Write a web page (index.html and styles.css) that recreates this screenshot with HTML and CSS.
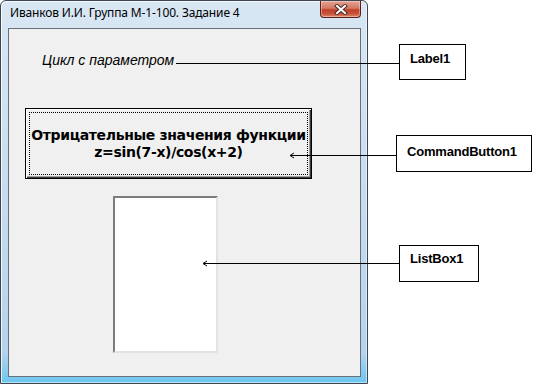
FILE: index.html
```html
<!DOCTYPE html>
<html lang="ru">
<head>
    <meta charset="UTF-8">
    <title>Цикл с параметром</title>
    <link rel="stylesheet" href="styles.css">
</head>
<body>
    <div class="window">
        <div class="titlebar">
            <span class="title">Иванков И.И. Группа М-1-100. Задание 4</span>
            <span class="close">
                <svg width="14" height="11" viewBox="0 0 14 11">
                    <path d="M3 2 L11 9 M11 2 L3 9" stroke="#4a2a26" stroke-width="4" stroke-linecap="square" fill="none"/>
                    <path d="M3 2 L11 9 M11 2 L3 9" stroke="#fff" stroke-width="2" stroke-linecap="square" fill="none"/>
                </svg>
            </span>
        </div>
        <div class="client">
            <div class="caption">Цикл с параметром</div>
            <button class="cmd"><span class="focus">Отрицательные значения функции<br>z=sin(7-x)/cos(x+2)</span></button>
            <div class="listbox"></div>
        </div>
    </div>

    <!-- leader lines to the control names -->
    <svg class="leaders" width="535" height="384" viewBox="0 0 535 384">
        <path d="M176 63.5 H399" />
        <path d="M291 155.5 H396 M294 153 L290 155.5 L294 158" />
        <path d="M204 263.5 H399 M207 261 L203 263.5 L207 266" />
    </svg>

    <div class="callout callout-label">Label1</div>
    <div class="callout callout-cmd">CommandButton1</div>
    <div class="callout callout-list">ListBox1</div>
</body>
</html>
```

FILE: styles.css
```css
* {
    margin: 0;
    padding: 0;
    box-sizing: border-box;
}

body {
    width: 535px;
    height: 384px;
    background: #fff;
    position: relative;
    overflow: hidden;
}

.window {
    width: 368px;
    height: 384px;
    border: 1px solid #3c4550;
    border-radius: 6px 6px 0 0;
    background: linear-gradient(to bottom, #d9e7f4 0%, #c8dcef 50%, #b4d3ee 92%, #6cc6f0 100%);
    box-shadow: inset 1px 1px 0 rgba(255, 255, 255, 0.8), inset -1px -1px 0 rgba(255, 255, 255, 0.5);
    display: flex;
    flex-direction: column;
}

.titlebar {
    height: 27px;
    display: flex;
    align-items: flex-start;
    justify-content: space-between;
    padding-left: 9px;
    padding-right: 6px;
}

.title {
    font-family: "Noto Sans", sans-serif;
    font-size: 12px;
    line-height: 16px;
    letter-spacing: -0.15px;
    padding-top: 4px;
    color: #000;
}

.close {
    width: 41px;
    height: 17px;
    border: 1px solid #5b2119;
    border-top: none;
    border-radius: 0 0 4px 4px;
    background: linear-gradient(to bottom, #e3a493 0%, #d27963 45%, #c2402a 55%, #c7533a 80%, #dd8a6b 100%);
    box-shadow: inset 0 0 0 1px rgba(255, 255, 255, 0.35);
    display: flex;
    align-items: center;
    justify-content: center;
}

.close svg {
    display: block;
}

.client {
    width: 353px;
    height: 349px;
    margin-left: 7px;
    border: 1px solid #6a7079;
    background: #f0f0f0;
    padding-top: 23px;
    display: flex;
    flex-direction: column;
    align-items: flex-start;
}

.caption {
    margin-left: 33px;
    font-family: "Liberation Sans", sans-serif;
    font-style: italic;
    font-size: 14px;
    line-height: 17px;
    color: #000;
}

.cmd {
    margin-top: 39px;
    margin-left: 16px;
    width: 287px;
    height: 71px;
    padding: 3px;
    background: #f0f0f0;
    border: 1px solid #000;
    box-shadow: inset 1px 1px 0 #fff, inset -1px -1px 0 #3c3c3c, inset -2px -2px 0 #a0a0a0;
    font-family: "DejaVu Sans", sans-serif;
    font-weight: bold;
    font-size: 14px;
    line-height: 17px;
    letter-spacing: -0.35px;
    white-space: nowrap;
    color: #000;
}

.focus {
    display: flex;
    align-items: center;
    justify-content: center;
    height: 100%;
    border: 1px dotted #000;
    text-align: center;
}

.listbox {
    margin-top: 17px;
    margin-left: 104px;
    width: 105px;
    height: 157px;
    background: #fff;
    border: 2px solid;
    border-color: #7c7c7c #e3e3e3 #e3e3e3 #7c7c7c;
}

.leaders {
    position: absolute;
    left: 0;
    top: 0;
    pointer-events: none;
}

.leaders path {
    stroke: #000;
    stroke-width: 1;
    fill: none;
}

.callout {
    position: absolute;
    background: #fff;
    border: 1px solid #000;
    font-family: "Liberation Sans", sans-serif;
    font-weight: bold;
    font-size: 13px;
    line-height: 15px;
    letter-spacing: -0.2px;
    color: #000;
    padding-left: 10px;
    padding-top: 6px;
}

.callout-label {
    left: 399px;
    top: 44px;
    width: 67px;
    height: 36px;
}

.callout-cmd {
    left: 396px;
    top: 135px;
    width: 136px;
    height: 37px;
    padding-top: 8px;
}

.callout-list {
    left: 399px;
    top: 245px;
    width: 80px;
    height: 37px;
    padding-top: 5px;
}
```
